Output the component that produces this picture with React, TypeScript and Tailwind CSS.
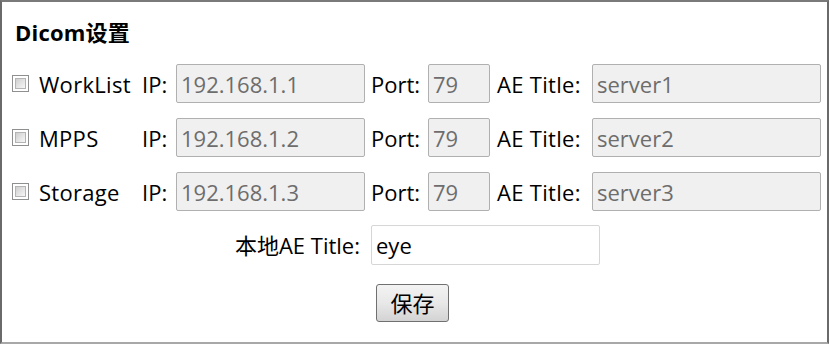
const ROWS = [
  { name: 'WorkList', ip: '192.168.1.1', port: '79', ae: 'server1' },
  { name: 'MPPS', ip: '192.168.1.2', port: '79', ae: 'server2' },
  { name: 'Storage', ip: '192.168.1.3', port: '79', ae: 'server3' },
];

const FONT = "font-['Open_Sans','Noto_Sans_CJK_SC',sans-serif]";

function CheckBox() {
  return (
    <span className="inline-block h-[17px] w-[17px] border border-[#8e8f8f] bg-white p-[2px]">
      <span className="block h-full w-full border border-[#b4b4b4] bg-gradient-to-br from-[#cfcfcf] to-[#f7f7f7]" />
    </span>
  );
}

function ReadonlyField({ value, width }: { value: string; width: string }) {
  return (
    <div
      className={`${width} flex h-[39px] items-center rounded-[2px] border border-[#b0b0b0] bg-[#f0f0f0] pl-[4px] text-[#6d6d6d]`}
    >
      {value}
    </div>
  );
}

export default function App() {
  return (
    <div
      className={`${FONT} h-[344px] w-[829px] border-2 border-b-[#a8a8a8] border-l-[#6a6a6a] border-r-[#6a6a6a] border-t-[#7a7a7a] bg-white pl-[10px] text-[22px] leading-[30px] text-black`}
    >
      <div className="pl-[3px] pt-[15px] text-[22px] font-bold tracking-[0.2px]">Dicom设置</div>

      <div className="mt-[17px] grid grid-cols-[130px_34px_189px_63px_62px_102px_229px] items-center gap-y-[15px]">
        {ROWS.map((row) => (
          <div key={row.name} className="contents">
            <div className="flex items-center">
              <CheckBox />
              <span className="ml-[10px] tracking-[0.3px]">{row.name}</span>
            </div>
            <span>IP:</span>
            <ReadonlyField value={row.ip} width="w-[189px]" />
            <span className="pl-[6px]">Port:</span>
            <ReadonlyField value={row.port} width="w-[62px]" />
            <span className="pl-[7px] tracking-[0.3px]">AE Title:</span>
            <ReadonlyField value={row.ae} width="w-[229px]" />
          </div>
        ))}
      </div>

      <div className="mt-[14px] flex items-center">
        <span className="w-[348px] text-right">本地AE Title:</span>
        <div className="ml-[11px] flex h-[40px] w-[229px] items-center rounded-[2px] border border-[#d6d6d6] bg-white pl-[4px]">
          eye
        </div>
      </div>

      <div className="mt-[19px] pl-[364px]">
        <button
          type="button"
          className="h-[38px] w-[73px] rounded-[3px] border border-[#707070] bg-gradient-to-b from-[#f3f3f3] via-[#e8e8e8] to-[#d3d3d3] text-[22px] leading-none"
        >
          保存
        </button>
      </div>
    </div>
  );
}
